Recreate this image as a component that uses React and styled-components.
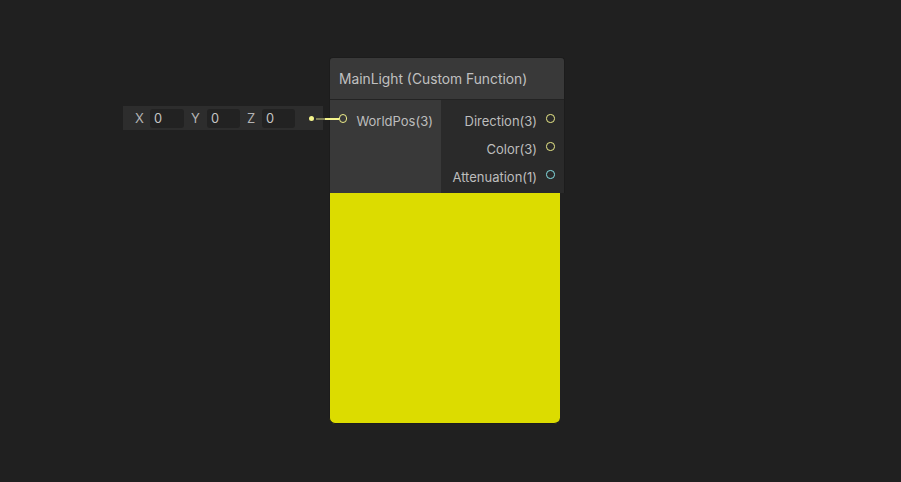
import React from 'react';
import styled, { createGlobalStyle } from 'styled-components';

const GlobalStyle = createGlobalStyle`
  html, body {
    margin: 0;
    padding: 0;
    background: #202020;
    font-family: Inter, "Noto Sans", sans-serif;
  }
`;

const Canvas = styled.div`
  position: relative;
  width: 901px;
  height: 482px;
  background: #202020;
  overflow: hidden;
`;

const Node = styled.div`
  position: absolute;
  left: 329px;
  top: 57px;
  width: 236px;
  display: flex;
  flex-direction: column;
`;

const Header = styled.div`
  height: 41px;
  background: #393939;
  border: 1px solid #1c1c1c;
  border-bottom: 1px solid #232323;
  border-radius: 4px 4px 0 0;
  display: flex;
  align-items: center;
  padding-left: 9px;
  color: #c0c0c0;
  font-size: 13.8px;
`;

const Body = styled.div`
  display: flex;
  height: 93px;
  border-left: 1px solid #1c1c1c;
  border-right: 1px solid #1c1c1c;
`;

const Inputs = styled.div`
  width: 111px;
  background: #393939;
  display: flex;
  flex-direction: column;
  padding-top: 10px;
`;

const Outputs = styled.div`
  flex: 1;
  background: #2a2a2a;
  display: flex;
  flex-direction: column;
  align-items: flex-end;
  padding-top: 10px;
  gap: 7px;
`;

const PortRow = styled.div`
  position: relative;
  height: 21px;
  display: flex;
  align-items: center;
  flex-direction: ${p => (p.$out ? 'row-reverse' : 'row')};
  gap: ${p => (p.$out ? '9px' : '9px')};
  padding: ${p => (p.$out ? '0 9.5px 0 0' : '0 0 0 9px')};
  color: #bdbdbd;
  font-size: 13px;
`;

const Port = styled.span`
  width: 6.4px;
  height: 6.4px;
  border-radius: 50%;
  border: 1.6px solid ${p => p.$color};
  flex: none;
  transform: translateY(-2px);
`;

const Preview = styled.div`
  width: 230px;
  height: 230px;
  background: #dcdc00;
  border-left: 1px solid #1c1c1c;
  border-bottom: 1px solid #1c1c1c;
  border-radius: 0 0 6px 6px;
`;

const Field = styled.div`
  position: absolute;
  right: calc(100% + 7px);
  top: -4px;
  width: 200px;
  height: 24px;
  background: #2d2d2d;
  display: flex;
  align-items: center;
  padding-left: 12px;
  box-sizing: border-box;
`;

const Axis = styled.span`
  width: ${p => p.$w || 15}px;
  color: #b4b4b4;
  font-size: 13px;
  flex: none;
`;

const Num = styled.span`
  width: ${p => p.$w || 34}px;
  height: 19px;
  margin-right: 7px;
  box-sizing: border-box;
  background: #222222;
  border-radius: 3px;
  color: #c4c4c4;
  font-size: 12.8px;
  display: flex;
  align-items: center;
  padding-left: 4px;
  flex: none;
`;

const Wire = styled.div`
  position: absolute;
  left: -21px;
  top: 4px;
  height: 9px;
  display: flex;
  align-items: center;
  z-index: 1;
`;

const Dot = styled.span`
  width: 5px;
  height: 5px;
  border-radius: 50%;
  background: #f4f48c;
  flex: none;
  margin-right: 1.5px;
`;

const Line = styled.span`
  height: 2px;
  width: ${p => p.$w}px;
  background: ${p => p.$c};
  flex: none;
`;

export default function App() {
  return (
    <Canvas>
      <GlobalStyle />
      <Node>
        <Header>MainLight (Custom Function)</Header>
        <Body>
          <Inputs>
            <PortRow>
              <Field>
                <Axis>X</Axis>
                <Num>0</Num>
                <Axis $w={16}>Y</Axis>
                <Num $w={33}>0</Num>
                <Axis>Z</Axis>
                <Num $w={33}>0</Num>
              </Field>
              <Wire>
                <Dot />
                <Line $w={9} $c="#7d7d55" />
                <Line $w={14} $c="#f4f48c" />
              </Wire>
              <Port $color="#f0f08a" />
              <span>WorldPos(3)</span>
            </PortRow>
          </Inputs>
          <Outputs>
            <PortRow $out>
              <Port $color="#e8e888" />
              <span>Direction(3)</span>
            </PortRow>
            <PortRow $out>
              <Port $color="#e8e888" />
              <span>Color(3)</span>
            </PortRow>
            <PortRow $out>
              <Port $color="#84dde2" />
              <span>Attenuation(1)</span>
            </PortRow>
          </Outputs>
        </Body>
        <Preview />
      </Node>
    </Canvas>
  );
}
